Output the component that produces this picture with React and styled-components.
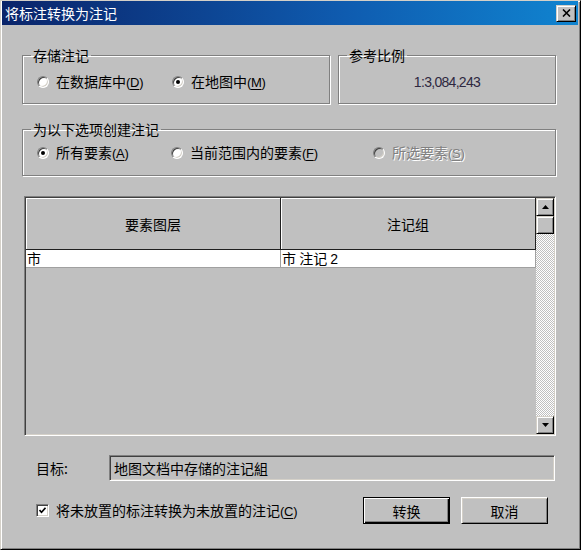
import React from 'react';
import styled, { createGlobalStyle } from 'styled-components';

const Global = createGlobalStyle`
  html, body { margin: 0; padding: 0; background: #c0c0c0; }
  body { font-family: "Noto Sans CJK SC", "Liberation Sans", sans-serif; }
`;

const Window = styled.div`
  box-sizing: border-box;
  width: 581px;
  height: 550px;
  background: #c0c0c0;
  border: 1px solid;
  border-color: #d4d0c8 #000 #000 #d4d0c8;
  box-shadow: inset 1px 1px #fff, inset -1px -1px #808080;
  padding: 0 2px 2px 1px;
  display: flex;
  flex-direction: column;
  font-family: "Noto Sans CJK SC", "Liberation Sans", sans-serif;
  font-size: 14px;
  color: #000;
`;

const TitleBar = styled.div`
  height: 24px;
  flex: none;
  display: flex;
  align-items: center;
  justify-content: space-between;
  padding: 0 2px 0 3px;
  background: linear-gradient(90deg, #0a246a 0%, #0f5cb0 60%, #1084d0 100%);
`;

const Title = styled.span`
  color: #fff;
  font-size: 14px;
  line-height: 16px;
`;

const CloseBtn = styled.div`
  box-sizing: border-box;
  width: 20px;
  height: 17px;
  background: #c0c0c0;
  border: 1px solid;
  border-color: #d4d0c8 #000 #000 #d4d0c8;
  box-shadow: inset 1px 1px #fff, inset -1px -1px #808080;
  display: flex;
  align-items: center;
  justify-content: center;
`;

const Content = styled.div`
  flex: 1;
  display: flex;
  flex-direction: column;
  padding: 22px 22px 0 20px;
`;

const TopRow = styled.div`
  display: grid;
  grid-template-columns: 308px 1fr;
  gap: 8px;
`;

const Group = styled.fieldset`
  margin: ${p => p.$mt || 0}px 0 0 0;
  min-width: 0;
  border: 1px solid #808080;
  box-shadow: inset 1px 1px #fff, 1px 1px #fff;
  padding: 0;
`;

const Legend = styled.legend`
  padding: 0 2px;
  margin-left: 8px;
  font-size: 14px;
  line-height: 16px;
`;

const GroupBody = styled.div`
  padding: ${p => p.$pad};
`;

const OptionRow = styled.div`
  display: flex;
  align-items: center;
  height: 16px;
`;

const Option = styled.label`
  display: flex;
  align-items: center;
  gap: 7px;
  flex: none;
  width: ${p => (p.$w ? `${p.$w}px` : 'auto')};
  line-height: 16px;
  white-space: nowrap;
  color: ${p => (p.$disabled ? '#808080' : '#000')};
  text-shadow: ${p => (p.$disabled ? '1px 1px #fff' : 'none')};
`;

const Radio = styled.span`
  box-sizing: border-box;
  flex: none;
  width: 12px;
  height: 12px;
  border-radius: 50%;
  border: 1px solid;
  border-color: #808080 #fff #fff #808080;
  background: ${p => (p.$disabled ? '#c0c0c0' : '#fff')};
  box-shadow: inset 1px 1px #404040, inset -1px -1px #d4d0c8;
  display: flex;
  align-items: center;
  justify-content: center;
  &::after {
    content: '';
    width: 4px;
    height: 4px;
    border-radius: 50%;
    background: #000;
    display: ${p => (p.$checked ? 'block' : 'none')};
  }
`;

const Key = styled.span`
  font-family: "Liberation Sans", sans-serif;
  font-size: 13px;
  letter-spacing: -0.3px;
  u { text-decoration: underline; text-underline-offset: 2px; }
`;

const ScaleText = styled.div`
  text-align: center;
  font-family: "Liberation Sans", sans-serif;
  font-size: 14px;
  line-height: 16px;
  letter-spacing: -0.7px;
  color: #2e2840;
`;

const TableBox = styled.div`
  box-sizing: border-box;
  margin: 20px 0 0 2px;
  height: 240px;
  border: 1px solid;
  border-color: #808080 #fff #fff #808080;
  box-shadow: inset 1px 1px #404040, inset -1px -1px #d4d0c8;
  padding: 1px;
  display: grid;
  grid-template-columns: 1fr 18px;
  background: #c0c0c0;
`;

const Grid = styled.div`
  display: grid;
  grid-template-columns: 1fr 1fr;
  grid-template-rows: 52px 18px;
  align-content: start;
`;

const HeadCell = styled.div`
  box-sizing: border-box;
  display: flex;
  align-items: center;
  justify-content: center;
  border-right: 1px solid #202020;
  border-bottom: 1px solid #202020;
  box-shadow: inset 1px 1px #fff;
  font-size: 14px;
`;

const Cell = styled.div`
  box-sizing: border-box;
  padding-left: 1px;
  background: #fff;
  border-right: 1px solid #a0a0a0;
  border-bottom: 1px solid #a0a0a0;
  font-size: 14px;
  line-height: 17px;
  white-space: pre;
`;

const Num = styled.span`
  font-family: "Liberation Sans", sans-serif;
  font-size: 14px;
`;

const ScrollBar = styled.div`
  display: flex;
  flex-direction: column;
`;

const ScrollBtn = styled.div`
  box-sizing: border-box;
  flex: none;
  height: 18px;
  background: #c0c0c0;
  border: 1px solid;
  border-color: #d4d0c8 #000 #000 #d4d0c8;
  box-shadow: inset 1px 1px #fff, inset -1px -1px #808080;
  display: flex;
  align-items: center;
  justify-content: center;
`;

const Track = styled.div`
  flex: 1;
  background: repeating-conic-gradient(#fff 0 25%, #c0c0c0 0 50%) 0 0 / 2px 2px;
`;

const TargetRow = styled.div`
  display: flex;
  align-items: center;
  margin-top: 19px;
  padding-left: 14px;
  margin-right: 1px;
`;

const Label = styled.span`
  width: 73px;
  flex: none;
  line-height: 16px;
`;

const Field = styled.div`
  box-sizing: border-box;
  flex: 1;
  height: 26px;
  border: 1px solid;
  border-color: #808080 #fff #fff #808080;
  box-shadow: inset 1px 1px #404040, inset -1px -1px #d4d0c8;
  display: flex;
  align-items: center;
  padding-left: 4px;
  line-height: 16px;
`;

const BottomRow = styled.div`
  display: flex;
  align-items: center;
  margin-top: 16px;
  padding-left: 14px;
  margin-right: 8px;
`;

const Check = styled.span`
  box-sizing: border-box;
  flex: none;
  width: 13px;
  height: 13px;
  border: 1px solid;
  border-color: #808080 #fff #fff #808080;
  box-shadow: inset 1px 1px #404040, inset -1px -1px #d4d0c8;
  background: #fff;
  display: flex;
  align-items: center;
  justify-content: center;
`;

const CheckLabel = styled.label`
  display: flex;
  align-items: center;
  gap: 7px;
  line-height: 16px;
  white-space: nowrap;
`;

const Buttons = styled.div`
  display: flex;
  gap: 11px;
  margin-left: auto;
`;

const Button = styled.button`
  box-sizing: border-box;
  width: 87px;
  height: 27px;
  padding: 0;
  background: #c0c0c0;
  font-family: "Noto Sans CJK SC", sans-serif;
  font-size: 14px;
  color: #000;
  border: 1px solid;
  border-color: ${p => (p.$default ? '#000' : '#fff #000 #000 #fff')};
  box-shadow: ${p =>
    p.$default
      ? 'inset 1px 1px #fff, inset -1px -1px #000, inset -2px -2px #808080'
      : 'inset 1px 1px #d4d0c8, inset -1px -1px #808080'};
`;

const Arrow = ({ up }) => (
  <svg width="7" height="4" viewBox="0 0 7 4">
    <polygon points={up ? '3.5,0 7,4 0,4' : '0,0 7,0 3.5,4'} fill="#000" />
  </svg>
);

const Mn = ({ k }) => (
  <Key>
    (<u>{k}</u>)
  </Key>
);

export default function App() {
  return (
    <>
      <Global />
      <Window>
        <TitleBar>
          <Title>将标注转换为注记</Title>
          <CloseBtn>
            <svg width="9" height="8" viewBox="0 0 9 8">
              <path d="M1 0.5 L8 7.5 M8 0.5 L1 7.5" stroke="#000" strokeWidth="1.6" />
            </svg>
          </CloseBtn>
        </TitleBar>
        <Content>
          <TopRow>
            <Group>
              <Legend>存储注记</Legend>
              <GroupBody $pad="11px 12px 13px 14px">
                <OptionRow>
                  <Option $w={135}>
                    <Radio />
                    <span>
                      在数据库中<Mn k="D" />
                    </span>
                  </Option>
                  <Option>
                    <Radio $checked />
                    <span>
                      在地图中<Mn k="M" />
                    </span>
                  </Option>
                </OptionRow>
              </GroupBody>
            </Group>
            <Group>
              <Legend>参考比例</Legend>
              <GroupBody $pad="11px 8px 13px 8px">
                <ScaleText>1:3,084,243</ScaleText>
              </GroupBody>
            </Group>
          </TopRow>
          <Group $mt={17}>
            <Legend>为以下选项创建注记</Legend>
            <GroupBody $pad="8px 12px 14px 14px">
              <OptionRow>
                <Option $w={134}>
                  <Radio $checked />
                  <span>
                    所有要素<Mn k="A" />
                  </span>
                </Option>
                <Option $w={202}>
                  <Radio />
                  <span>
                    当前范围内的要素<Mn k="F" />
                  </span>
                </Option>
                <Option $disabled>
                  <Radio $disabled />
                  <span>
                    所选要素<Mn k="S" />
                  </span>
                </Option>
              </OptionRow>
            </GroupBody>
          </Group>
          <TableBox>
            <Grid>
              <HeadCell>要素图层</HeadCell>
              <HeadCell>注记组</HeadCell>
              <Cell>市</Cell>
              <Cell>
                市 注记 <Num>2</Num>
              </Cell>
            </Grid>
            <ScrollBar>
              <ScrollBtn>
                <Arrow up />
              </ScrollBtn>
              <ScrollBtn />
              <Track />
              <ScrollBtn>
                <Arrow />
              </ScrollBtn>
            </ScrollBar>
          </TableBox>
          <TargetRow>
            <Label>目标:</Label>
            <Field>地图文档中存储的注记組</Field>
          </TargetRow>
          <BottomRow>
            <CheckLabel>
              <Check>
                <svg width="7" height="7" viewBox="0 0 7 7">
                  <path d="M0.5 3 L2.5 5.2 L6.5 0.8" stroke="#000" strokeWidth="1.6" fill="none" />
                </svg>
              </Check>
              <span>
                将未放置的标注转换为未放置的注记<Mn k="C" />
              </span>
            </CheckLabel>
            <Buttons>
              <Button $default>转换</Button>
              <Button>取消</Button>
            </Buttons>
          </BottomRow>
        </Content>
      </Window>
    </>
  );
}
